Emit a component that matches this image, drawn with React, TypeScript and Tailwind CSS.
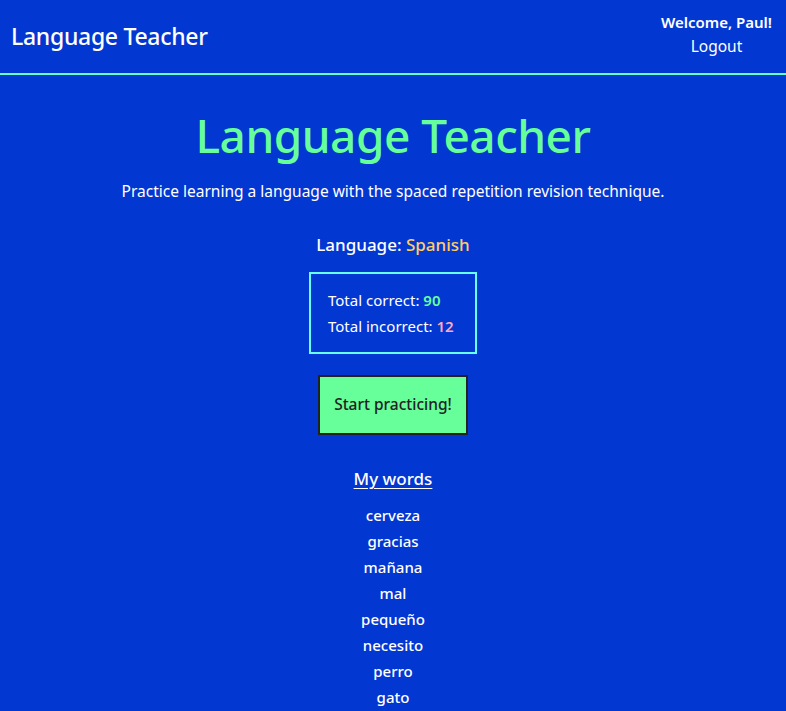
const words = ["cerveza", "gracias", "mañana", "mal", "pequeño", "necesito", "perro", "gato"];

export default function App() {
  return (
    <div className="min-h-screen bg-[#0337d2] text-white font-['Noto_Sans',sans-serif]">
      {/* Header */}
      <header className="flex items-center justify-between h-[75px] pl-[11px] pr-[14px] border-b-2 border-[#66ffcc]">
        <h1 className="text-[23px] font-medium tracking-[-0.3px]">Language Teacher</h1>
        <div className="flex flex-col items-center -mt-[3px]">
          <span className="text-[15px] font-semibold leading-[22px]">Welcome, Paul!</span>
          <button className="text-[15.5px] leading-[27px]">Logout</button>
        </div>
      </header>

      <main className="flex flex-col items-center text-center pt-[28px]">
        <h2 className="text-[46px] leading-[64px] font-medium text-[#66ff99] tracking-[-0.5px]">
          Language Teacher
        </h2>
        <p className="mt-[12px] text-[15.5px] leading-[24px]">
          Practice learning a language with the spaced repetition revision technique.
        </p>

        <h3 className="mt-[30px] text-[17px] font-medium leading-[24px]">
          Language: <span className="text-[#ffcc66]">Spanish</span>
        </h3>

        <div className="mt-[15px] border-2 border-[#66ffff] px-[17px] py-[13px] text-left text-[15px] leading-[26px] w-[168px]">
          <p>
            Total correct: <span className="font-semibold text-[#66ff99]">90</span>
          </p>
          <p>
            Total incorrect: <span className="font-semibold text-[#ffaabb]">12</span>
          </p>
        </div>

        <button className="mt-[21px] w-[150px] h-[60px] bg-[#66ff99] border-2 border-[#222222] text-[#222222] text-[15.5px] font-medium">
          Start practicing!
        </button>

        <h4 className="mt-[31px] text-[17px] font-medium underline underline-offset-[3px] leading-[26px]">
          My words
        </h4>
        <ul className="mt-[10px] text-[15px] font-medium leading-[26px]">
          {words.map((w) => (
            <li key={w}>{w}</li>
          ))}
        </ul>
      </main>
    </div>
  );
}
